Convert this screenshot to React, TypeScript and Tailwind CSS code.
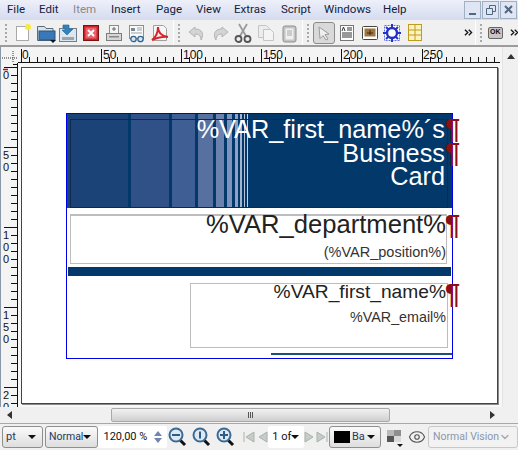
import { ReactNode } from 'react';
import { ChevronDown, Eye } from 'lucide-react';

const menuItems = [
  { label: 'File', className: 'w-[32px]' },
  { label: 'Edit', className: 'w-[34px]' },
  { label: 'Item', className: 'w-[38px] text-[#8a8a8a]' },
  { label: 'Insert', className: 'w-[45px]' },
  { label: 'Page', className: 'w-[40px]' },
  { label: 'View', className: 'w-[38px]' },
  { label: 'Extras', className: 'w-[47px]' },
  { label: 'Script', className: 'w-[43px]' },
  { label: 'Windows', className: 'w-[59px]' },
  { label: 'Help', className: 'w-[40px]' },
];

const stripes = [
  { width: 'w-[61px]', color: 'bg-[#1c4377]' },
  { width: 'w-[3px]', color: 'bg-[#03386a]' },
  { width: 'w-[38px]', color: 'bg-[#2f5188]' },
  { width: 'w-[3px]', color: 'bg-[#03386a]' },
  { width: 'w-[23px]', color: 'bg-[#3f5f94]' },
  { width: 'w-[3px]', color: 'bg-[#03386a]' },
  { width: 'w-[15px]', color: 'bg-[#56709f]' },
  { width: 'w-[3px]', color: 'bg-[#03386a]' },
  { width: 'w-[8px]', color: 'bg-[#6a82ad]' },
  { width: 'w-[3px]', color: 'bg-[#03386a]' },
  { width: 'w-[5px]', color: 'bg-[#7d92bc]' },
  { width: 'w-[3px]', color: 'bg-[#03386a]' },
  { width: 'w-[3px]', color: 'bg-[#8fa2c6]' },
  { width: 'w-[2px]', color: 'bg-[#03386a]' },
  { width: 'w-[2px]', color: 'bg-[#a3b3d0]' },
  { width: 'w-[2px]', color: 'bg-[#03386a]' },
  { width: 'w-[1px]', color: 'bg-[#b7c3da]' },
  { width: 'w-[2px]', color: 'bg-[#03386a]' },
  { width: 'w-[1px]', color: 'bg-[#c6d0e2]' },
  { width: 'flex-1', color: 'bg-[#03386a]' },
];

function Icon({ children, className = '' }: { children: ReactNode; className?: string }) {
  return (
    <svg viewBox="0 0 22 22" className={`w-[22px] h-[22px] shrink-0 ${className}`}>
      {children}
    </svg>
  );
}

function Grip() {
  return (
    <div className="flex flex-col gap-[2px] w-[3px] mx-[2px]">
      {[0, 1, 2, 3, 4].map((i) => (
        <div key={i} className="w-[2px] h-[2px] bg-[#a8a8a8]" />
      ))}
    </div>
  );
}

function Divider() {
  return <div className="w-px h-[25px] bg-[#c4c4c4] mx-[2px] border-r border-white" />;
}

function Chevrons() {
  return (
    <svg viewBox="0 0 9 7" className="w-[9px] h-[7px]">
      <path d="M1 0.5 4 3.5 1 6.5M5 0.5 8 3.5 5 6.5" fill="none" stroke="#111" strokeWidth="1.4" />
    </svg>
  );
}

function MainToolbarIcons() {
  return (
    <>
      <Icon>
        <rect x="4.5" y="4.5" width="12" height="14" fill="#fff" stroke="#a9a9a9" />
        <circle cx="16" cy="5" r="3" fill="#f5ea3a" />
      </Icon>
      <div className="w-px" />
      <Icon>
        <path d="M2.5 4.5h7l1.5 2h7v12h-15.500z" fill="#dbe3ea" stroke="#5a6b7a" />
        <rect x="4" y="9" width="16" height="9" fill="#3a78b8" stroke="#27557f" />
        <path d="M15 18h6l-3 3z" fill="#111" />
      </Icon>
      <div className="w-px" />
      <Icon>
        <rect x="2.500" y="6.500" width="17" height="13" fill="#dce6ee" stroke="#6f7f8c" />
        <rect x="5" y="15" width="12" height="3" fill="#9aa5ae" />
        <path d="M6 3h6v4h4l-6 6-5-5h3v-2h-2z" fill="#2f83c0" stroke="#1d5f8f" strokeWidth="0.6" />
      </Icon>
      <div className="w-px" />
      <Icon>
        <rect x="3.500" y="3.500" width="15" height="15" fill="#c8232c" stroke="#7c1216" />
        <rect x="5.500" y="5.500" width="11" height="11" fill="#e8646a" />
        <path d="M8 8l6 6M14 8l-6 6" stroke="#fff" strokeWidth="2" />
      </Icon>
      <div className="w-px" />
      <Icon>
        <rect x="6.500" y="3.500" width="9" height="8" fill="#f4f4f4" stroke="#8d8d8d" />
        <path d="M11 5v4M9 7h4" stroke="#666" />
        <rect x="3.500" y="11.500" width="15" height="7" fill="#d6d6d6" stroke="#7d7d7d" />
        <rect x="6" y="14" width="10" height="1.500" fill="#888" />
      </Icon>
      <div className="w-px" />
      <Icon>
        <rect x="3.500" y="3.500" width="14" height="13" fill="#fafafa" stroke="#8d8d8d" />
        <rect x="5" y="6" width="4" height="3" fill="#7a8792" />
        <path d="M11 6h5M11 8h5M5 11h11" stroke="#9aa2a8" />
        <circle cx="7.500" cy="17" r="2.700" fill="#d7e6f3" stroke="#34648c" strokeWidth="1.300" />
        <circle cx="14.500" cy="17" r="2.700" fill="#d7e6f3" stroke="#34648c" strokeWidth="1.300" />
      </Icon>
      <div className="w-px" />
      <Icon>
        <path d="M4.500 3.500h10l3 3v12h-13z" fill="#f6f6f6" stroke="#a0a0a0" />
        <path d="M3 18c4-3 6-8 6-13 0 6 3 9 10 10-6-1-11 1-16 3z" fill="none" stroke="#d8232a" strokeWidth="2" />
      </Icon>
    </>
  );
}

function EditToolbarIcons() {
  return (
    <>
      <Icon>
        <path d="M9 5 3 10l6 5v-3c3 0 6 1 6 6 3-5 2-11-6-11z" fill="#d4d4d4" stroke="#b3b3b3" />
      </Icon>
      <div className="w-px" />
      <Icon>
        <path d="M13 5l6 5-6 5v-3c-3 0-6 1-6 6-3-5-2-11 6-11z" fill="#d4d4d4" stroke="#b3b3b3" />
      </Icon>
      <div className="w-px" />
      <Icon>
        <path d="M7 2l7 12M15 2l-7 12" stroke="#9b9b9b" strokeWidth="1.800" />
        <circle cx="6.500" cy="17" r="3" fill="none" stroke="#555" strokeWidth="1.800" />
        <circle cx="15.500" cy="17" r="3" fill="none" stroke="#555" strokeWidth="1.800" />
      </Icon>
      <div className="w-px" />
      <Icon>
        <path d="M3.500 3.500h8l3 3v9h-11z" fill="#ececec" stroke="#c4c4c4" />
        <path d="M8.500 7.500h7l3 3v8h-10z" fill="#f4f4f4" stroke="#c4c4c4" />
      </Icon>
      <div className="w-px" />
      <Icon>
        <rect x="5" y="4" width="13" height="16" rx="2" fill="#c4c4c4" stroke="#8f8f8f" />
        <rect x="7.500" y="6.500" width="8" height="11" fill="#efefef" />
        <path d="M9 9h5M9 11h5M9 13h5" stroke="#a8a8a8" />
      </Icon>
    </>
  );
}

function ModeToolbarIcons() {
  return (
    <>
      <div className="w-[22px] h-[22px] flex items-center justify-center rounded-[3px] border border-[#8b8b8b] bg-[#d9d9d9] shrink-0">
        <svg viewBox="0 0 16 16" className="w-[16px] h-[16px]">
          <path d="M3 2l10 7-4 .6 3 4.400-2 1-3-4.400-3 3z" fill="#f0f0f0" stroke="#9a9a9a" />
        </svg>
      </div>
      <div className="w-px" />
      <Icon>
        <rect x="4.500" y="3.500" width="13" height="15" fill="#fff" stroke="#777" />
        <path d="M6 9l1.500-4 1.500 4M11 6h5M11 8h5M6 11h10M6 13h10M6 15h10" fill="none" stroke="#333" />
      </Icon>
      <div className="w-px" />
      <Icon>
        <rect x="3.500" y="4.500" width="15" height="13" rx="1" fill="#fff" stroke="#444" />
        <rect x="5.500" y="6.500" width="11" height="8" fill="#a0743f" />
        <path d="M8 11h6M11 8v5" stroke="#3a2a14" />
      </Icon>
      <div className="w-px" />
      <Icon>
        <rect x="3.500" y="3.500" width="15" height="15" fill="#fff" stroke="#5d6fe0" strokeDasharray="2 1" />
        <circle cx="11" cy="11" r="5" fill="#fff" stroke="#2333c8" strokeWidth="2.400" />
        <path d="M11 2v4M11 16v4M2 11h4M16 11h4M5 5l3 3M14 14l3 3M17 5l-3 3M8 14l-3 3" stroke="#2333c8" strokeWidth="2" />
      </Icon>
      <div className="w-px" />
      <Icon>
        <rect x="4.500" y="2.500" width="13" height="16" fill="#fbf3bd" stroke="#c19a22" />
        <path d="M11 3v15M5 8h12M5 13h12" stroke="#c19a22" />
      </Icon>
    </>
  );
}

function Toolbar() {
  return (
    <div className="h-[27px] shrink-0 flex items-center bg-[#f0f0f0] border-b-2 border-[#9c9c9c]">
      <div className="w-[3px]" />
      <Grip />
      <div className="w-[2px]" />
      <MainToolbarIcons />
      <Divider />
      <Grip />
      <div className="w-[3px]" />
      <EditToolbarIcons />
      <Divider />
      <Grip />
      <div className="w-[1px]" />
      <ModeToolbarIcons />
      <div className="w-[40px]" />
      <Chevrons />
      <Divider />
      <Grip />
      <div className="w-[3px]" />
      <div className="w-[16px] h-[12px] rounded-[2px] border border-[#666] bg-[#c6c6c6] flex items-center justify-center font-['Liberation_Sans',sans-serif] text-[7px] font-bold text-[#111]">
        OK
      </div>
      <div className="w-[7px]" />
      <Chevrons />
    </div>
  );
}

function HorizontalRuler() {
  const ticks = Array.from({ length: 61 }, (_, i) => i);
  return (
    <div className="relative h-[16px] bg-[#f4f4f4] overflow-hidden font-['Liberation_Sans',sans-serif] text-[12px] leading-none text-[#111]">
      <svg viewBox="0 0 484 16" className="w-[484px] h-[16px]">
        <path d="M0 15.500H482" stroke="#111" />
        {ticks.map((i) => {
          const x = 2.5 + i * 8.02;
          const long = i % 10 === 0;
          return <path key={i} d={`M${Math.round(x) + 0.5} ${long ? 2 : 10}V15`} stroke="#111" />;
        })}
      </svg>
      {[0, 50, 100, 150, 200, 250].map((n, i) => (
        <span key={n} className={`absolute top-[2px] ${['left-[4px]', 'left-[85px]', 'left-[165px]', 'left-[245px]', 'left-[325px]', 'left-[405px]'][i]}`}>
          {n}
        </span>
      ))}
    </div>
  );
}

function VerticalRuler() {
  const ticks = Array.from({ length: 43 }, (_, i) => i);
  return (
    <div className="relative w-[17px] bg-[#f4f4f4] overflow-hidden font-['Liberation_Sans',sans-serif] text-[11px] leading-[12px] text-center text-[#111]">
      <svg viewBox="0 0 17 360" className="w-[17px] h-[360px]">
        <path d="M16.500 0V360" stroke="#111" />
        <path d="M12 1.500H17" stroke="#111" />
        {ticks.map((i) => {
          const long = i % 10 === 0;
          return <path key={i} d={`M${long ? 3 : 10} ${4.5 + i * 8}H17`} stroke="#111" />;
        })}
        <path d="M2 6.500H7" stroke="#e00000" strokeWidth="1.500" />
      </svg>
      <div className="absolute left-0 w-[10px] top-[6px] flex flex-col">
        <span>0</span>
        <span className="mt-[68px]">5</span>
        <span>0</span>
        <span className="mt-[56px]">1</span>
        <span>0</span>
        <span>0</span>
        <span className="mt-[44px]">1</span>
        <span>5</span>
        <span>0</span>
        <span className="mt-[44px]">2</span>
        <span>0</span>
      </div>
    </div>
  );
}

function Pilcrow({ className }: { className: string }) {
  return (
    <span className={`absolute left-[423px] font-['Liberation_Sans',sans-serif] text-[27px] leading-[24px] font-bold text-[#8b0f14] ${className}`}>
      ¶
    </span>
  );
}

function Page() {
  return (
    <div className="relative ml-[3px] mt-[4px] w-[477px] h-[337px] bg-white border border-[#e0000c] shadow-[1px_1px_0_#8a8a8a]">
      {/* business card frames sit freely on the page */}
      <div className="relative w-full h-full font-['Liberation_Sans',sans-serif]">
        <div className="absolute left-[45px] top-[45px] w-[385px] h-[95px] flex">
          {stripes.map((s, i) => (
            <div key={i} className={`${s.width} ${s.color}`} />
          ))}
        </div>
        <div className="absolute left-[48px] top-[51px] w-[378px] h-[89px] border border-[#0d2b4a]" />
        <div className="absolute right-[52px] top-[48px] text-white text-right text-[25.300px] leading-[23.500px] pt-[2px] whitespace-nowrap">
          <div>%VAR_first_name%´s</div>
          <div>Business</div>
          <div>Card</div>
        </div>
        <div className="absolute left-[48px] top-[146px] w-[377px] h-[50px] border border-[#bdbdbd] border-t-2" />
        <div className="absolute right-[51px] top-[144px] text-[#222] text-[25.600px] leading-none whitespace-nowrap">%VAR_department%</div>
        <div className="absolute right-[51px] top-[177px] text-[#333] text-[14.500px] leading-none whitespace-nowrap">(%VAR_position%)</div>
        <div className="absolute left-[46px] top-[199px] w-[383px] h-[9px] bg-[#03386a]" />
        <div className="absolute left-[168px] top-[215px] w-[258px] h-[65px] border border-[#bdbdbd]" />
        <div className="absolute right-[51px] top-[214px] text-[#222] text-[19.200px] leading-none whitespace-nowrap">%VAR_first_name%</div>
        <div className="absolute right-[51px] top-[242px] text-[#333] text-[14.300px] leading-none whitespace-nowrap">%VAR_email%</div>
        <div className="absolute left-[249px] top-[285px] w-[181px] h-[2px] bg-[#1f4e79]" />
        <div className="absolute left-[44px] top-[45px] w-[387px] h-[246px] border border-[#0000e6]" />
        <Pilcrow className="top-[49px]" />
        <Pilcrow className="top-[73px]" />
        <Pilcrow className="top-[145px]" />
        <Pilcrow className="top-[214px]" />
      </div>
    </div>
  );
}

function VerticalScrollbar() {
  return (
    <div className="w-[16px] bg-[#f0f0f0] flex flex-col items-center pt-[7px] border-l border-[#e4e4e4]">
      <svg viewBox="0 0 8 5" className="w-[8px] h-[5px]">
        <path d="M4 0 8 5H0z" fill="#333" />
      </svg>
    </div>
  );
}

function HorizontalScrollbar() {
  return (
    <div className="h-[16px] shrink-0 bg-[#f0f0f0] flex items-center pl-[7px]">
      <svg viewBox="0 0 5 8" className="w-[5px] h-[8px]">
        <path d="M0 4 5 0V8z" fill="#333" />
      </svg>
      <div className="w-[99px]" />
      <div className="w-[279px] h-[14px] rounded-[2px] border border-[#a9a9a9] bg-gradient-to-b from-[#f2f2f2] to-[#cfcfcf] flex items-center justify-center gap-px">
        <div className="w-px h-[6px] bg-[#555]" />
        <div className="w-px h-[6px] bg-[#555]" />
        <div className="w-px h-[6px] bg-[#555]" />
      </div>
      <div className="w-[100px]" />
      <svg viewBox="0 0 5 8" className="w-[5px] h-[8px]">
        <path d="M5 4 0 0V8z" fill="#333" />
      </svg>
    </div>
  );
}

function Combo({ className, children }: { className: string; children: ReactNode }) {
  return (
    <div className={`h-[22px] flex items-center justify-between rounded-[3px] border border-[#8f8f8f] bg-gradient-to-b from-[#fafafa] to-[#dedede] ${className}`}>
      {children}
    </div>
  );
}

function Caret() {
  return (
    <svg viewBox="0 0 8 4" className="w-[8px] h-[4px] shrink-0">
      <path d="M0 0H8L4 4z" fill="#111" />
    </svg>
  );
}

function Magnifier({ mark }: { mark: 'minus' | 'one' | 'plus' }) {
  return (
    <Icon className="w-[20px]">
      <path d="M12 13l6 6" stroke="#111" strokeWidth="3" />
      <circle cx="9" cy="9" r="6.500" fill="#dfe8f1" stroke="#3a6a95" strokeWidth="2" />
      {mark === 'one' ? (
        <path d="M9 5.500v7" stroke="#2c5c88" strokeWidth="2" />
      ) : (
        <path d={mark === 'plus' ? 'M5 9h8M9 5v8' : 'M5 9h8'} stroke="#2c5c88" strokeWidth="2" />
      )}
    </Icon>
  );
}

function PageArrow({ d }: { d: string }) {
  return (
    <svg viewBox="0 0 12 12" className="w-[12px] h-[12px] shrink-0">
      <path d={d} fill="#c6cdc8" stroke="#aab3ad" />
    </svg>
  );
}

function StatusBar() {
  return (
    <div className="h-[27px] shrink-0 flex items-center bg-[#f0f0f0] border-t border-[#a8a8a8] pl-[2px] font-['Roboto',sans-serif] text-[11px] text-[#1f3a5f]">
      <Combo className="w-[42px] pl-[3px] pr-[6px]">
        <span>pt</span>
        <Caret />
      </Combo>
      <div className="w-[2px]" />
      <Combo className="w-[55px] pl-[3px] pr-[6px]">
        <span className="text-[10.500px]">Normal</span>
        <Caret />
      </Combo>
      <div className="w-[71px] h-[22px] flex items-center bg-white rounded-[2px] pl-[5px] text-[#111] whitespace-nowrap">
        <span className="w-[46px]">120,00 %</span>
        <div className="flex flex-col gap-[2px] ml-[2px] w-[14px] items-center">
          <svg viewBox="0 0 8 5" className="w-[8px] h-[5px]">
            <path d="M4 0 8 5H0z" fill="#7484b0" />
          </svg>
          <svg viewBox="0 0 8 5" className="w-[8px] h-[5px]">
            <path d="M0 0H8L4 5z" fill="#7484b0" />
          </svg>
        </div>
      </div>
      <Magnifier mark="minus" />
      <div className="w-[2px]" />
      <Magnifier mark="one" />
      <div className="w-[2px]" />
      <Magnifier mark="plus" />
      <div className="w-[6px]" />
      <PageArrow d="M1 1v10M11 1v10L3 6z" />
      <div className="w-[1px]" />
      <PageArrow d="M11 1v10L3 6z" />
      <div className="w-[37px] h-[22px] flex items-center justify-center gap-0 rounded-[2px] bg-white text-[#111]">
        <span>1 of</span>
        <Caret />
      </div>
      <PageArrow d="M1 1v10l8-5z" />
      <PageArrow d="M1 1v10l8-5zM11 1v10" />
      <div className="w-[1px]" />
      <Combo className="w-[54px] pl-[4px] pr-[5px]">
        <div className="w-[16px] h-[12px] bg-black" />
        <span className="w-[13px] overflow-hidden">Ba</span>
        <Caret />
      </Combo>
      <div className="w-[3px]" />
      <Icon className="w-[20px]">
        <rect x="3" y="4" width="7" height="6" fill="#b9b9b9" />
        <rect x="10" y="4" width="7" height="6" fill="#8f8f8f" />
        <rect x="3" y="10" width="7" height="6" fill="#555" />
        <rect x="10" y="10" width="7" height="6" fill="#d9d9d9" />
        <path d="M13 18h6l-3 3z" fill="#111" />
      </Icon>
      <div className="w-[2px]" />
      <Eye size={18} strokeWidth={1.500} className="text-[#555] shrink-0" />
      <div className="w-[2px]" />
      <div className="w-[90px] h-[22px] flex items-center justify-between pl-[4px] pr-[6px] rounded-[3px] border border-[#c8c8c8] bg-[#f2f2f2] text-[10.500px] text-[#8b97ad] whitespace-nowrap">
        <span>Normal Vision</span>
        <ChevronDown size={12} strokeWidth={3} className="text-[#aaa]" />
      </div>
    </div>
  );
}

export default function App() {
  return (
    <div className="w-[518px] h-[450px] overflow-hidden flex flex-col bg-[#f0f0f0]">
      <div className="h-[20px] shrink-0 flex items-center bg-gradient-to-b from-[#eef0f9] to-[#d5dcf0] pl-[7px] font-['Roboto',sans-serif] text-[11.500px] text-[#12223d]">
        {menuItems.map((item) => (
          <span key={item.label} className={item.className}>
            {item.label}
          </span>
        ))}
        <div className="flex-1" />
        <div className="flex gap-px pr-[1px] pb-[1px]">
          <div className="w-[17px] h-[18px] border border-[#9fb0c4] bg-[#dfe5f2] flex items-end justify-center pb-[3px]">
            <div className="w-[7px] h-[2px] bg-[#51687f]" />
          </div>
          <div className="w-[17px] h-[18px] border border-[#9fb0c4] bg-[#dfe5f2] flex items-center justify-center">
            <svg viewBox="0 0 10 10" className="w-[10px] h-[10px]">
              <path d="M3.500 3V.5h6v6H7M.5 3.500h6v6h-6z" fill="none" stroke="#51687f" />
            </svg>
          </div>
          <div className="w-[17px] h-[18px] border border-[#9fb0c4] bg-[#dfe5f2] flex items-center justify-center">
            <svg viewBox="0 0 9 9" className="w-[9px] h-[9px]">
              <path d="M1 1l7 7M8 1 1 8" stroke="#51687f" strokeWidth="2" />
            </svg>
          </div>
        </div>
      </div>
      <Toolbar />
      <div className="flex-1 min-h-0 flex">
        <div className="w-[1px] bg-[#8a97a6]" />
        <div className="flex-1 min-w-0 flex flex-col">
          <div className="h-[16px] shrink-0 flex">
            <div className="w-[17px] relative bg-[#f4f4f4]">
              <svg viewBox="0 0 17 16" className="w-[17px] h-[16px]">
                <path d="M1 11H16M12 4V15" stroke="#333" strokeDasharray="1 1" fill="none" />
              </svg>
            </div>
            <HorizontalRuler />
          </div>
          <div className="flex-1 min-h-0 flex overflow-hidden">
            <VerticalRuler />
            <div className="flex-1 min-w-0 bg-[#f7f7f7]">
              <Page />
            </div>
          </div>
        </div>
        <VerticalScrollbar />
      </div>
      <HorizontalScrollbar />
      <StatusBar />
    </div>
  );
}
